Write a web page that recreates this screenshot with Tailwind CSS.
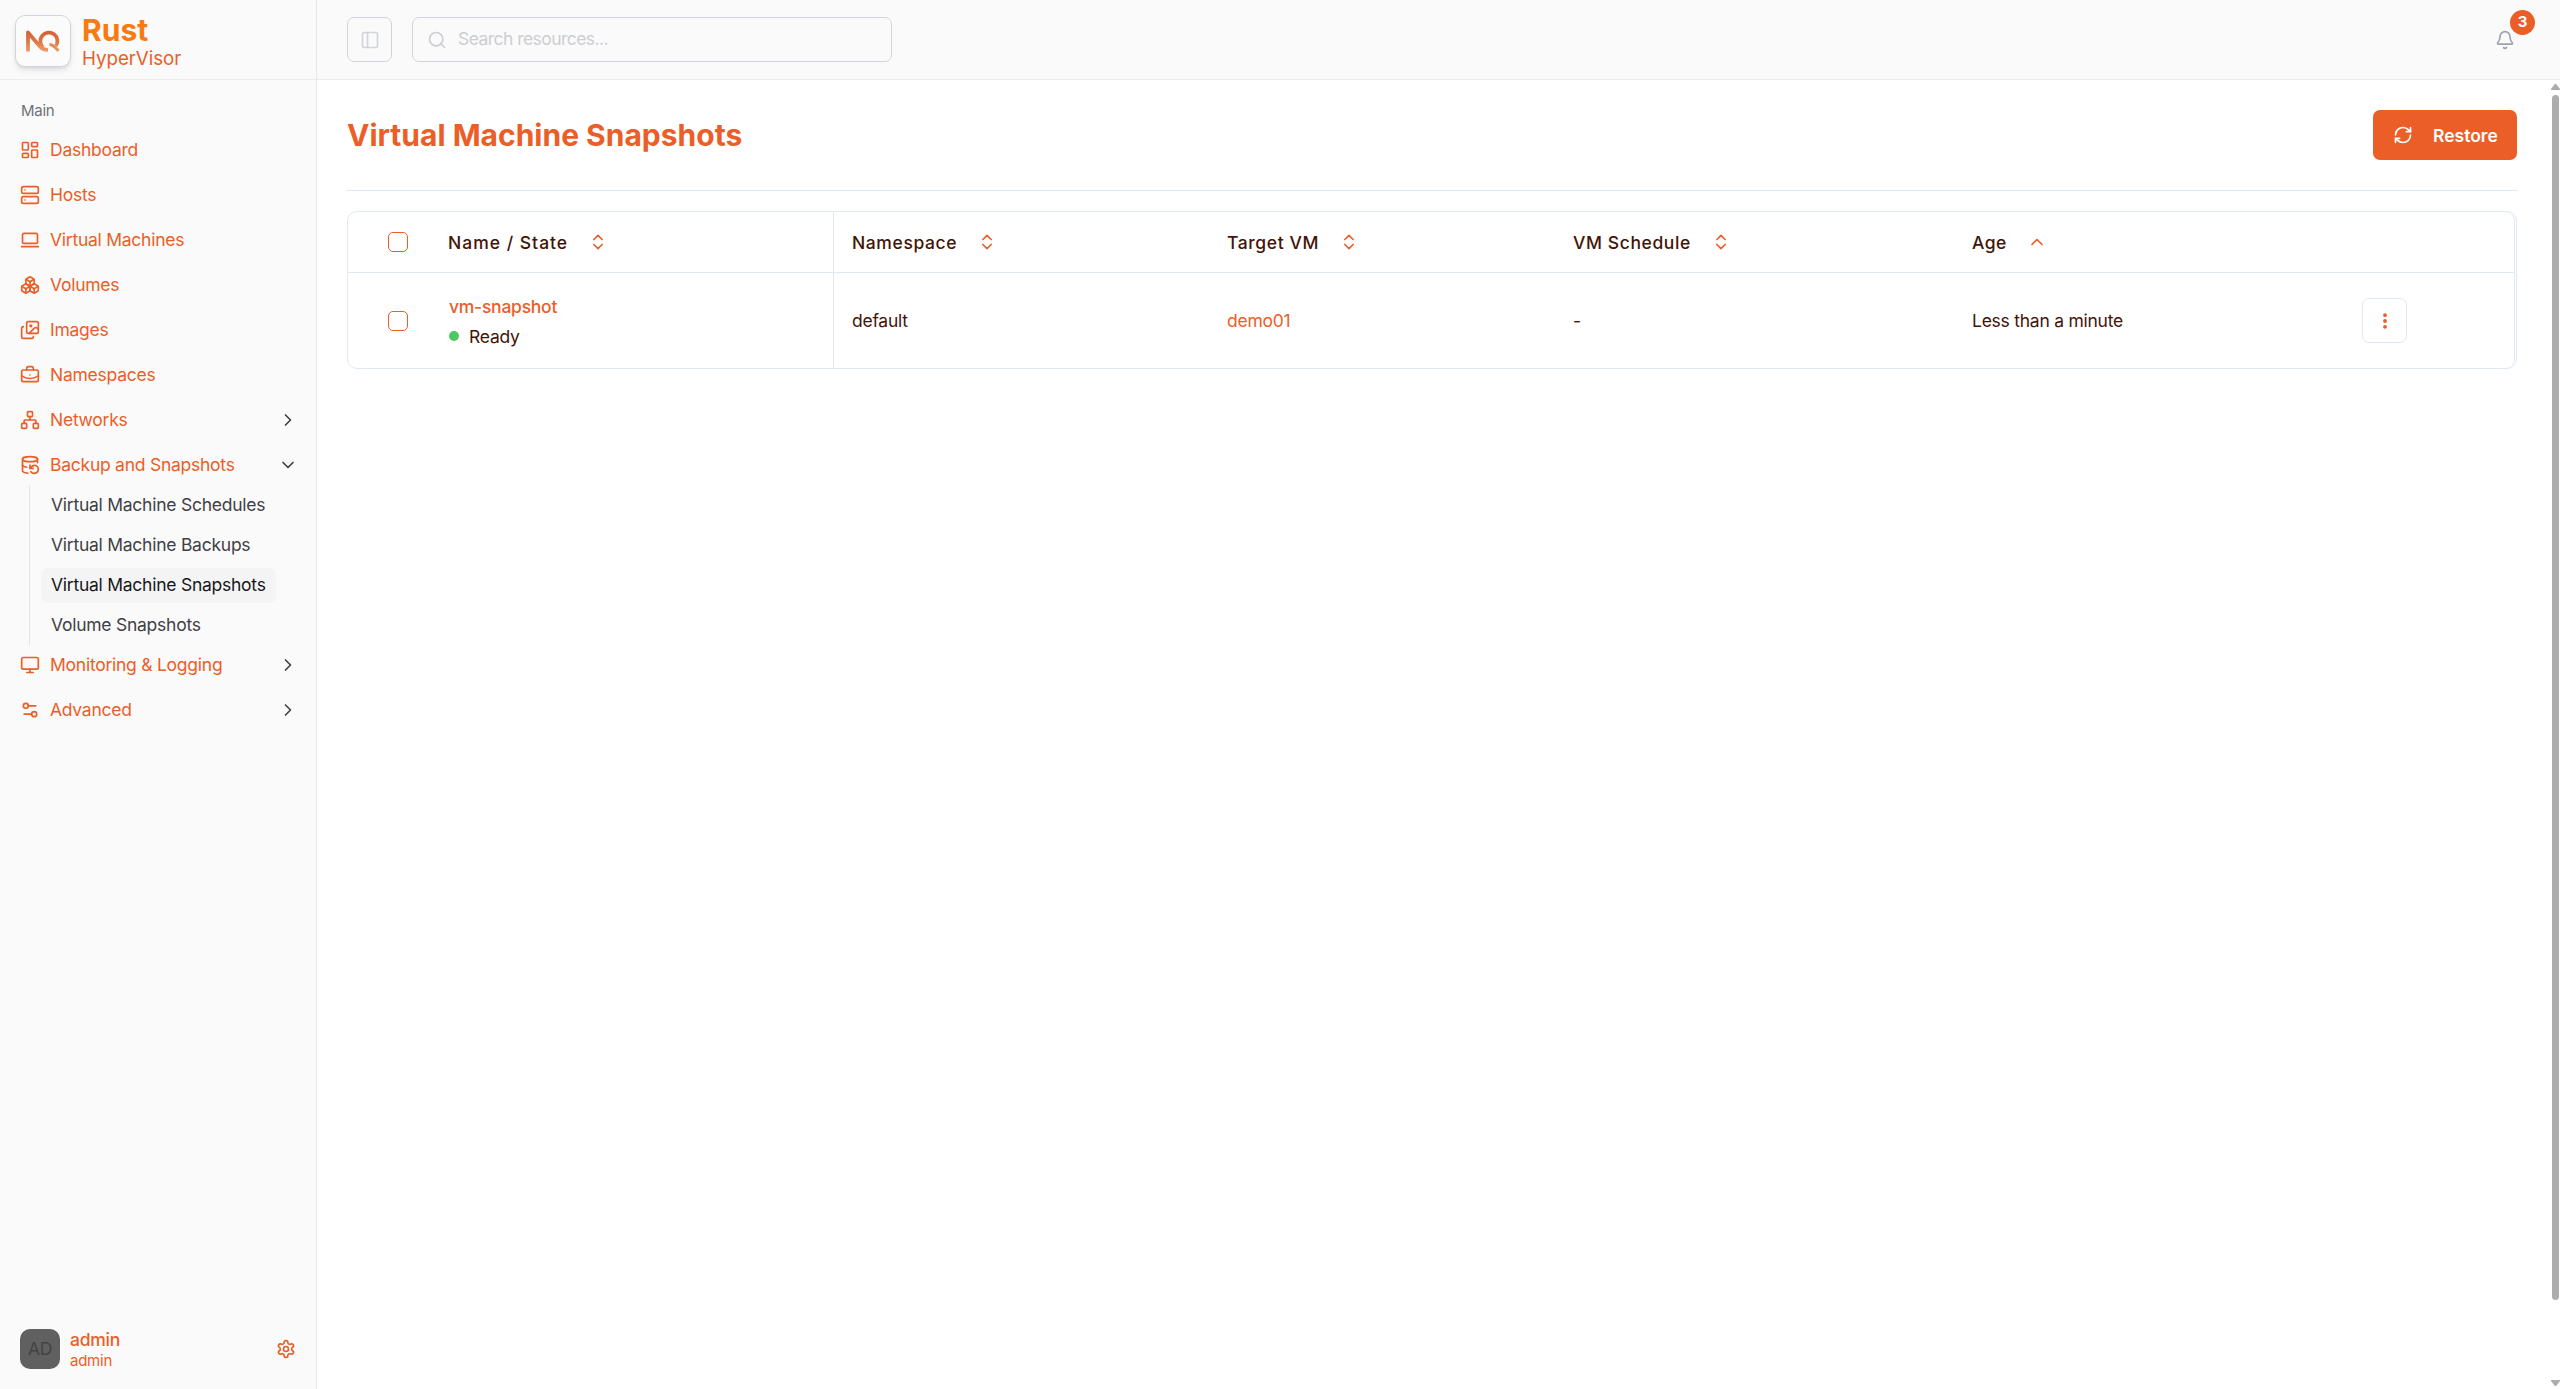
<!DOCTYPE html>
<html lang="en">
<head>
<meta charset="utf-8">
<title>Virtual Machine Snapshots</title>
<script src="https://cdn.jsdelivr.net/npm/@tailwindcss/browser@4"></script>
</head>
<body class="flex h-screen overflow-hidden bg-white font-['Inter','Liberation_Sans',sans-serif] text-[17.5px] tracking-[-0.25px] text-[#431407]">

<aside class="flex w-[317px] shrink-0 flex-col border-r border-[#e8e8ea] bg-[#fafafa] text-[#eb5e28]">
  <div class="flex h-20 shrink-0 border-b border-[#ececee] pt-[15px] pl-[15px]">
    <div class="flex h-[52px] w-14 items-center justify-center rounded-[10px] border border-[#d1d5db] bg-[#fbfbfc] shadow-md">
      <svg class="h-[24px] w-[36px]" viewBox="0 0 36 24" fill="none" stroke="url(#g)" stroke-width="3.8" stroke-linejoin="round">
        <defs><linearGradient id="g" gradientUnits="userSpaceOnUse" x1="0" y1="0" x2="0" y2="24"><stop offset="0" stop-color="#cf5c33"/><stop offset=".5" stop-color="#dc7643"/><stop offset="1" stop-color="#f0a075"/></linearGradient></defs>
        <path d="M3 22.500V3.500L15 17.500Q18 21 23 20.800"/>
        <path d="M18 18.500A8.600 8.600 0 1 1 31 17"/>
        <path d="M24.500 15.500Q28 15.500 33.500 22" stroke-width="3"/>
      </svg>
    </div>
    <div class="flex flex-col pl-[11px]">
      <span class="-mt-[1px] text-[30px] leading-[32px] font-bold tracking-normal text-[#f77a12]">Rust</span>
      <span class="mt-[1px] text-[18.75px] leading-[24px] tracking-[-0.05px]">HyperVisor</span>
    </div>
  </div>

  <nav class="flex flex-1 flex-col px-5 pt-[18px]">
    <div class="h-[25px] pl-px text-[15px] leading-[25px] text-[#71717a]">Main</div>
    <ul class="flex flex-col gap-[5px] pt-[7px]">
      <li class="flex h-10 items-center gap-2.5">
        <svg class="size-5" viewBox="0 0 24 24" fill="none" stroke="currentColor" stroke-width="2" stroke-linecap="round" stroke-linejoin="round"><rect width="7" height="9" x="3" y="3" rx="1"/><rect width="7" height="5" x="14" y="3" rx="1"/><rect width="7" height="9" x="14" y="12" rx="1"/><rect width="7" height="5" x="3" y="16" rx="1"/></svg>
        <span class="pt-px">Dashboard</span></li>
      <li class="flex h-10 items-center gap-2.5">
        <svg class="size-5" viewBox="0 0 24 24" fill="none" stroke="currentColor" stroke-width="2" stroke-linecap="round" stroke-linejoin="round"><rect width="20" height="8" x="2" y="2" rx="2"/><rect width="20" height="8" x="2" y="14" rx="2"/><path d="M6 6h.01M6 18h.01"/></svg>
        <span class="pt-px">Hosts</span></li>
      <li class="flex h-10 items-center gap-2.5">
        <svg class="size-5" viewBox="0 0 24 24" fill="none" stroke="currentColor" stroke-width="2" stroke-linecap="round" stroke-linejoin="round"><rect width="18" height="12" x="3" y="4" rx="2"/><path d="M2 20h20"/></svg>
        <span class="pt-px">Virtual Machines</span></li>
      <li class="flex h-10 items-center gap-2.5">
        <svg class="size-5" viewBox="0 0 24 24" fill="none" stroke="currentColor" stroke-width="2" stroke-linecap="round" stroke-linejoin="round"><path d="M2.970 12.920A2 2 0 0 0 2 14.630v3.240a2 2 0 0 0 .970 1.710l3 1.800a2 2 0 0 0 2.060 0L12 19v-5.500l-5-3-4.030 2.420Z"/><path d="m7 16.500-4.740-2.850"/><path d="m7 16.500 5-3"/><path d="M7 16.500v5.170"/><path d="M12 13.500V19l3.970 2.380a2 2 0 0 0 2.060 0l3-1.800a2 2 0 0 0 .970-1.710v-3.240a2 2 0 0 0-.970-1.710L17 10.500l-5 3Z"/><path d="m17 16.500-5-3"/><path d="m17 16.500 4.740-2.850"/><path d="M17 16.500v5.170"/><path d="M7.970 4.420A2 2 0 0 0 7 6.130v4.370l5 3 5-3V6.130a2 2 0 0 0-.970-1.710l-3-1.800a2 2 0 0 0-2.060 0l-3 1.800Z"/><path d="M12 8 7.260 5.150"/><path d="m12 8 4.740-2.850"/><path d="M12 13.500V8"/></svg>
        <span class="pt-px">Volumes</span></li>
      <li class="flex h-10 items-center gap-2.5">
        <svg class="size-5" viewBox="0 0 24 24" fill="none" stroke="currentColor" stroke-width="2" stroke-linecap="round" stroke-linejoin="round"><path d="m22 11-1.296-1.296a2.400 2.400 0 0 0-3.408 0L11 16"/><path d="M4 8a2 2 0 0 0-2 2v10a2 2 0 0 0 2 2h10a2 2 0 0 0 2-2"/><circle cx="13" cy="7" r="1" fill="currentColor"/><rect x="8" y="2" width="14" height="14" rx="2"/></svg>
        <span class="pt-px">Images</span></li>
      <li class="flex h-10 items-center gap-2.5">
        <svg class="size-5" viewBox="0 0 24 24" fill="none" stroke="currentColor" stroke-width="2" stroke-linecap="round" stroke-linejoin="round"><path d="M12 12h.01"/><path d="M16 6V4a2 2 0 0 0-2-2h-4a2 2 0 0 0-2 2v2"/><path d="M22 13a18.150 18.150 0 0 1-20 0"/><rect width="20" height="14" x="2" y="6" rx="2"/></svg>
        <span class="pt-px">Namespaces</span></li>
      <li class="flex h-10 items-center gap-2.5">
        <svg class="size-5" viewBox="0 0 24 24" fill="none" stroke="currentColor" stroke-width="2" stroke-linecap="round" stroke-linejoin="round"><rect x="16" y="16" width="6" height="6" rx="1"/><rect x="2" y="16" width="6" height="6" rx="1"/><rect x="9" y="2" width="6" height="6" rx="1"/><path d="M5 16v-3a1 1 0 0 1 1-1h12a1 1 0 0 1 1 1v3"/><path d="M12 12V8"/></svg>
        <span class="flex-1 pt-px">Networks</span>
        <svg class="-mr-[2px] size-5 text-[#3f3f46]" viewBox="0 0 24 24" fill="none" stroke="currentColor" stroke-width="2" stroke-linecap="round" stroke-linejoin="round"><path d="m9 18 6-6-6-6"/></svg></li>
      <li class="flex flex-col">
        <div class="flex h-10 items-center gap-2.5">
          <svg class="size-5" viewBox="0 0 24 24" fill="none" stroke="currentColor" stroke-width="2" stroke-linecap="round" stroke-linejoin="round"><ellipse cx="12" cy="5" rx="9" ry="3"/><path d="M3 12a9 3 0 0 0 5 2.690"/><path d="M21 9.300V5"/><path d="M3 5v14a9 3 0 0 0 6.470 2.880"/><path d="M12 12v4h4"/><path d="M13 20a5 5 0 0 0 9-3 4.500 4.500 0 0 0-4.500-4.500c-1.330 0-2.540.540-3.410 1.410L12 16"/></svg>
          <span class="flex-1 pt-px">Backup and Snapshots</span>
          <svg class="-mr-[2px] size-5 text-[#3f3f46]" viewBox="0 0 24 24" fill="none" stroke="currentColor" stroke-width="2" stroke-linecap="round" stroke-linejoin="round"><path d="m6 9 6 6 6-6"/></svg>
        </div>
        <ul class="ml-[9px] flex flex-col gap-[5px] border-l border-[#e4e4e7] py-[2.5px] pl-[11px] text-[#3f3f46]">
          <li class="flex h-[35px] w-[235px] items-center px-[10px] pt-px">Virtual Machine Schedules</li>
          <li class="flex h-[35px] w-[235px] items-center px-[10px] pt-px">Virtual Machine Backups</li>
          <li class="flex h-[35px] w-[235px] items-center rounded-[7px] bg-[#f4f4f5] px-[10px] pt-px whitespace-nowrap text-[#18181b]">Virtual Machine Snapshots</li>
          <li class="flex h-[35px] w-[235px] items-center px-[10px] pt-px">Volume Snapshots</li>
        </ul>
      </li>
      <li class="-mt-[5px] flex h-10 items-center gap-2.5">
        <svg class="size-5" viewBox="0 0 24 24" fill="none" stroke="currentColor" stroke-width="2" stroke-linecap="round" stroke-linejoin="round"><rect width="20" height="14" x="2" y="3" rx="2"/><path d="M8 21h8M12 17v4"/></svg>
        <span class="flex-1 pt-px">Monitoring &amp; Logging</span>
        <svg class="-mr-[2px] size-5 text-[#3f3f46]" viewBox="0 0 24 24" fill="none" stroke="currentColor" stroke-width="2" stroke-linecap="round" stroke-linejoin="round"><path d="m9 18 6-6-6-6"/></svg></li>
      <li class="flex h-10 items-center gap-2.5">
        <svg class="size-5" viewBox="0 0 24 24" fill="none" stroke="currentColor" stroke-width="2" stroke-linecap="round" stroke-linejoin="round"><path d="M14 17H5M19 7h-9"/><circle cx="17" cy="17" r="3"/><circle cx="7" cy="7" r="3"/></svg>
        <span class="flex-1 pt-px">Advanced</span>
        <svg class="-mr-[2px] size-5 text-[#3f3f46]" viewBox="0 0 24 24" fill="none" stroke="currentColor" stroke-width="2" stroke-linecap="round" stroke-linejoin="round"><path d="m9 18 6-6-6-6"/></svg></li>
    </ul>
  </nav>

  <div class="flex h-20 shrink-0 items-center px-5">
    <div class="flex size-10 items-center justify-center rounded-[10px] bg-[#606060] pt-px text-[17.5px] text-[#434343]">AD</div>
    <div class="flex flex-1 flex-col pl-2.5">
      <span class="text-[17.5px] leading-[22px] font-medium">admin</span>
      <span class="text-[15px] leading-[19px]">admin</span>
    </div>
    <svg class="size-5" viewBox="0 0 24 24" fill="none" stroke="currentColor" stroke-width="2" stroke-linecap="round" stroke-linejoin="round"><path d="M12.220 2h-.440a2 2 0 0 0-2 2v.180a2 2 0 0 1-1 1.730l-.430.250a2 2 0 0 1-2 0l-.150-.080a2 2 0 0 0-2.730.730l-.220.380a2 2 0 0 0 .730 2.730l.150.100a2 2 0 0 1 1 1.720v.510a2 2 0 0 1-1 1.740l-.150.090a2 2 0 0 0-.730 2.730l.220.380a2 2 0 0 0 2.730.730l.150-.080a2 2 0 0 1 2 0l.430.250a2 2 0 0 1 1 1.730V20a2 2 0 0 0 2 2h.440a2 2 0 0 0 2-2v-.180a2 2 0 0 1 1-1.730l.430-.250a2 2 0 0 1 2 0l.150.080a2 2 0 0 0 2.730-.730l.220-.390a2 2 0 0 0-.730-2.730l-.150-.080a2 2 0 0 1-1-1.740v-.500a2 2 0 0 1 1-1.740l.150-.090a2 2 0 0 0 .730-2.730l-.220-.380a2 2 0 0 0-2.730-.730l-.150.080a2 2 0 0 1-2 0l-.430-.250a2 2 0 0 1-1-1.730V4a2 2 0 0 0-2-2z"/><circle cx="12" cy="12" r="3"/></svg>
  </div>
</aside>

<div class="flex min-w-0 flex-1 flex-col">
  <header class="flex h-20 shrink-0 items-center border-b border-[#ececee] bg-[#fafafa] pr-[45px] pl-[30px]">
    <button class="mr-5 flex size-[45px] items-center justify-center rounded-[7px] border border-[#d1d5db] text-[#d1d5db]">
      <svg class="size-5" viewBox="0 0 24 24" fill="none" stroke="currentColor" stroke-width="2" stroke-linecap="round" stroke-linejoin="round"><rect width="18" height="18" x="3" y="3" rx="2"/><path d="M9 3v18"/></svg>
    </button>
    <div class="flex h-[45px] w-[480px] items-center gap-[11px] rounded-[7px] border border-[#d1d5db] pl-[14px] text-[#cdced2]">
      <svg class="size-5" viewBox="0 0 24 24" fill="none" stroke="currentColor" stroke-width="2" stroke-linecap="round" stroke-linejoin="round"><circle cx="11" cy="11" r="8"/><path d="m21 21-4.300-4.300"/></svg>
      <span class="tracking-[-0.55px]">Search resources...</span>
    </div>
    <div class="relative ml-auto size-5 text-[#9ca3af]">
      <svg class="size-5" viewBox="0 0 24 24" fill="none" stroke="currentColor" stroke-width="2" stroke-linecap="round" stroke-linejoin="round"><path d="M10.268 21a2 2 0 0 0 3.464 0"/><path d="M3.262 15.326A1 1 0 0 0 4 17h16a1 1 0 0 0 .740-1.673C19.410 13.956 18 12.499 18 8A6 6 0 0 0 6 8c0 4.499-1.411 5.956-2.738 7.326"/></svg>
      <span class="absolute -top-5 left-[15px] flex size-[25px] items-center justify-center rounded-full bg-[#eb5e28] text-[15px] font-bold tracking-normal text-white">3</span>
    </div>
  </header>

  <div class="flex min-h-0 flex-1">
    <main class="flex w-[2233px] flex-col pr-[33px] pl-[30px]">
      <div class="flex h-[111px] shrink-0 items-start justify-between border-b border-[#e2e8f0] pt-[30px]">
        <h1 class="pt-[6px] text-[30px] leading-[38px] font-bold tracking-normal text-[#eb5e28]">Virtual Machine Snapshots</h1>
        <button class="flex h-[50px] w-36 items-center rounded-[7px] bg-[#eb5e28] pl-5 text-white">
          <svg class="size-5" viewBox="0 0 24 24" fill="none" stroke="currentColor" stroke-width="2" stroke-linecap="round" stroke-linejoin="round"><path d="M3 12a9 9 0 0 1 9-9 9.750 9.750 0 0 1 6.740 2.740L21 8"/><path d="M21 3v5h-5"/><path d="M21 12a9 9 0 0 1-9 9 9.750 9.750 0 0 1-6.740-2.740L3 16"/><path d="M8 16H3v5"/></svg>
          <span class="pt-[2px] pl-5 font-semibold tracking-[0px]">Restore</span>
        </button>
      </div>

      <div class="mt-5 rounded-[10px] border border-[#e2e8f0]">
        <div class="mr-px border-r border-[#e2e8f0] rounded-r-[9px]">
          <div class="grid h-[61px] grid-cols-[81px_405px_373px_346px_399px_390px_1fr] border-b border-[#e2e8f0] font-medium tracking-[0.6px]">
            <div class="flex items-center pl-10"><span class="size-5 rounded-[5px] border border-[#eb5e28]"></span></div>
            <div class="flex items-center border-r border-[#e2e8f0] pl-[19px]"><span class="pt-[3px] tracking-[1px]">Name / State</span><svg class="ml-[20px] size-5 text-[#eb5e28]" viewBox="0 0 24 24" fill="none" stroke="currentColor" stroke-width="2" stroke-linecap="round" stroke-linejoin="round"><path d="m7 15 5 5 5-5M7 9l5-5 5 5"/></svg></div>
            <div class="flex items-center pl-[18px]"><span class="pt-[3px]">Namespace</span><svg class="ml-5 size-5 text-[#eb5e28]" viewBox="0 0 24 24" fill="none" stroke="currentColor" stroke-width="2" stroke-linecap="round" stroke-linejoin="round"><path d="m7 15 5 5 5-5M7 9l5-5 5 5"/></svg></div>
            <div class="flex items-center pl-5"><span class="pt-[3px]">Target VM</span><svg class="ml-5 size-5 text-[#eb5e28]" viewBox="0 0 24 24" fill="none" stroke="currentColor" stroke-width="2" stroke-linecap="round" stroke-linejoin="round"><path d="m7 15 5 5 5-5M7 9l5-5 5 5"/></svg></div>
            <div class="flex items-center pl-5"><span class="pt-[3px]">VM Schedule</span><svg class="ml-5 size-5 text-[#eb5e28]" viewBox="0 0 24 24" fill="none" stroke="currentColor" stroke-width="2" stroke-linecap="round" stroke-linejoin="round"><path d="m7 15 5 5 5-5M7 9l5-5 5 5"/></svg></div>
            <div class="flex items-center pl-5"><span class="pt-[3px] tracking-[0.4px]">Age</span><svg class="ml-5 size-5 text-[#eb5e28]" viewBox="0 0 24 24" fill="none" stroke="currentColor" stroke-width="2" stroke-linecap="round" stroke-linejoin="round"><path d="m18 15-6-6-6 6"/></svg></div>
            <div></div>
          </div>
          <div class="grid h-[95px] grid-cols-[81px_405px_373px_346px_399px_390px_1fr]">
            <div class="flex items-center pl-10"><span class="size-5 rounded-[5px] border border-[#eb5e28]"></span></div>
            <div class="flex flex-col justify-center border-r border-[#e2e8f0] pt-[3px] pl-5">
              <span class="leading-[30px] font-medium text-[#eb5e28]">vm-snapshot</span>
              <span class="flex items-center gap-[10px] leading-[30px]"><span class="-mt-[2px] size-2.5 rounded-full bg-[#4fc85f]"></span>Ready</span>
            </div>
            <div class="flex items-center pt-px pl-[18px]">default</div>
            <div class="flex items-center pt-px pl-5 text-[#eb5e28]">demo01</div>
            <div class="flex items-center pt-px pl-5">-</div>
            <div class="flex items-center pt-px pl-5">Less than a minute</div>
            <div class="flex items-center pl-5">
              <button class="flex size-[45px] items-center justify-center rounded-[7px] border border-[#e2e8f0] text-[#eb5e28]">
                <svg class="size-5" viewBox="0 0 24 24" fill="currentColor" stroke="currentColor" stroke-width="2"><circle cx="12" cy="12" r="1.300"/><circle cx="12" cy="5" r="1.300"/><circle cx="12" cy="19" r="1.300"/></svg>
              </button>
            </div>
          </div>
        </div>
      </div>
    </main>
    <div class="flex w-[10px] flex-col items-center justify-between pt-[4px] pb-[3px]">
      <svg class="h-[6px] w-[9px] shrink-0" viewBox="0 0 9 6" fill="#adadad"><path d="M3.800 0h1.400L9 5v1H0V5z"/></svg>
      <div class="mt-[5px] mb-auto h-[1205px] w-[7px] rounded-full bg-[#adadad]"></div>
      <svg class="h-[6px] w-[9px] shrink-0" viewBox="0 0 9 6" fill="#adadad"><path d="M3.800 6h1.400L9 1V0H0v1z"/></svg>
    </div>
  </div>
</div>
</body>
</html>
